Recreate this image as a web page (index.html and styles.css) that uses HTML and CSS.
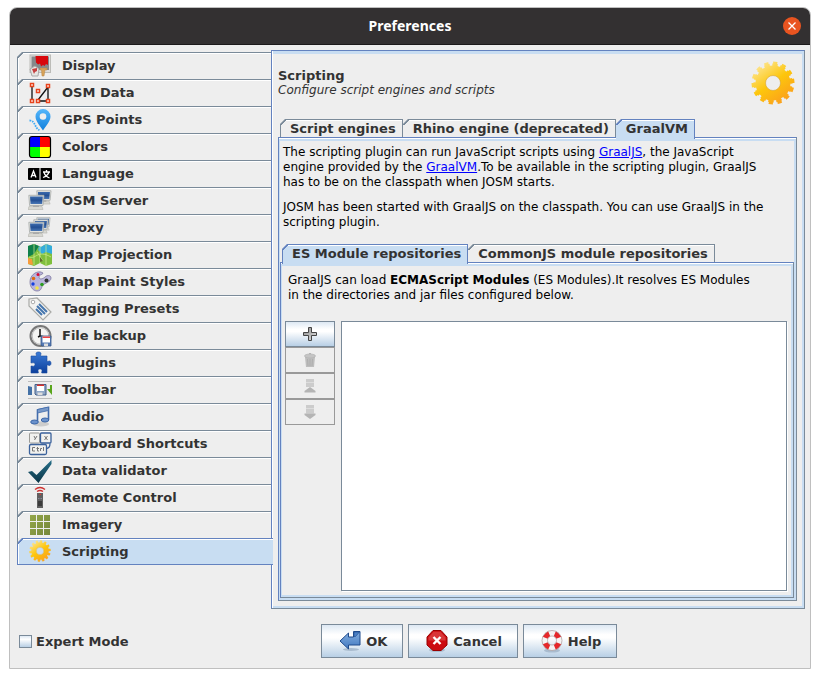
FILE: index.html
```html
<!DOCTYPE html>
<html lang="en">
<head>
<meta charset="utf-8">
<title>Preferences</title>
<link rel="stylesheet" href="styles.css">
</head>
<body>
<svg class="defs" width="0" height="0" aria-hidden="true">
  <defs>
    <linearGradient id="gold" gradientUnits="userSpaceOnUse" x1="8" y1="4" x2="34" y2="40"><stop offset="0" stop-color="#fde48c"/><stop offset=".5" stop-color="#fdc60c"/><stop offset="1" stop-color="#fba01c"/></linearGradient>
    <linearGradient id="screen" x1="0" y1="0" x2="0" y2="1"><stop offset="0" stop-color="#3d6cae"/><stop offset=".5" stop-color="#234f93"/><stop offset="1" stop-color="#4a78b6"/></linearGradient>
    <linearGradient id="blue" x1="0" y1="0" x2="0" y2="1"><stop offset="0" stop-color="#3b7bd6"/><stop offset="1" stop-color="#0c3f9c"/></linearGradient>
    <linearGradient id="pin" x1="0" y1="0" x2="0" y2="1"><stop offset="0" stop-color="#55b6fb"/><stop offset="1" stop-color="#1180dc"/></linearGradient>
    <linearGradient id="arrow" x1="0" y1="0" x2="0" y2="1"><stop offset="0" stop-color="#86b0e0"/><stop offset="1" stop-color="#4078c0"/></linearGradient>
    <linearGradient id="grey" x1="0" y1="0" x2="1" y2="1"><stop offset="0" stop-color="#888"/><stop offset="1" stop-color="#e4e4e4"/></linearGradient>
    <linearGradient id="tick" x1="0" y1="0" x2="0" y2="1"><stop offset="0" stop-color="#28708a"/><stop offset="1" stop-color="#0a3446"/></linearGradient>
    <linearGradient id="olive" gradientUnits="userSpaceOnUse" x1="0" y1="2" x2="24" y2="22"><stop offset="0" stop-color="#95a84a"/><stop offset="1" stop-color="#74863a"/></linearGradient>
    <symbol id="gear" viewBox="0 0 44 44">
      <circle cx="22" cy="22" r="12.5" fill="none" stroke="url(#gold)" stroke-width="10"/>
      <circle cx="22" cy="22" r="17.5" fill="none" stroke="url(#gold)" stroke-width="4" pathLength="28" stroke-dasharray="1.35 .65" stroke-dashoffset="1.175"/>
      <circle cx="22" cy="22" r="20" fill="none" stroke="url(#gold)" stroke-width="3" pathLength="28" stroke-dasharray=".95 1.05" stroke-dashoffset=".975"/>
      <circle cx="22" cy="22" r="7.5" fill="none" stroke="#d9a431" stroke-width="1" opacity=".6"/>
    </symbol>
    <symbol id="pc" viewBox="0 0 17 16">
      <path d="M1 12h13l1 3H0z" fill="#d8d8d2" stroke="#b5b5ae" stroke-width=".6"/>
      <path d="M.8.8h15.200l-1 10.200H1.600z" fill="#e4e4e0" stroke="#a5aaa8" stroke-width=".8"/>
      <path d="M2 2h12.800l-.7 7.500H2.600z" fill="url(#screen)"/><path d="M5 11h6v1.500H5z" fill="#aaa"/>
    </symbol>
  </defs>
</svg>
<div class="window">
  <header class="titlebar">
    <h1>Preferences</h1>
    <button class="close" type="button" aria-label="Close"><svg width="18" height="18" viewBox="0 0 18 18"><path d="M5.500 5.500l7 7m0-7l-7 7" stroke="#fff" stroke-width="1.300"/></svg></button>
  </header>
  <main class="main">
    <nav class="sidebar" role="tablist" aria-orientation="vertical">
      <button class="side" type="button" role="tab"><svg width="24" height="24" viewBox="0 0 24 24"><rect x="2" y="1" width="20.500" height="17.500" fill="#ddd" stroke="#bcbcb8"/><rect x="3.500" y="2.500" width="17.500" height="13.500" fill="#85898b"/><path d="M7.500 2H20v9l-2-1-1.500 2-1.500-1-2 1.500-1-3-2 1-2-2z" fill="#d8080c"/><path d="M4 22l-2-7 5-3 4 3-1 7z" fill="#e7e7e3" stroke="#aaa"/><path d="M4 15l5-1v3l-2 1-1 2z" fill="#c54040"/><path d="M12 14h7v2h-2l-1 6h-2l-.500-6H12z" fill="#d7a25a" stroke="#b98642" stroke-width=".5"/></svg><span>Display</span></button>
      <button class="side" type="button" role="tab"><svg width="24" height="24" viewBox="0 0 24 24"><path d="M4 4v15m6 1h10V6L10 19" fill="none" stroke="#111" stroke-width="1.300"/><g fill="#fff" stroke="#e8431c" stroke-width="1.500"><rect x="2.500" y="2.500" width="3" height="3"/><rect x="8.500" y="8.500" width="3" height="3"/><rect x="18.500" y="3.500" width="3" height="3"/><rect x="2.500" y="18.500" width="3" height="3"/><rect x="8.500" y="18.500" width="3" height="3"/><rect x="18.500" y="18.500" width="3" height="3"/></g></svg><span>OSM Data</span></button>
      <button class="side" type="button" role="tab"><svg width="24" height="24" viewBox="0 0 24 24"><path d="M1.500 12.500c6 0 5 8 10 9.500" fill="none" stroke="#3caaf5" stroke-width="1.800" stroke-dasharray="1.600 1"/><path d="M15 22.500C12 18 7.500 13 7.500 8.500a7.500 7.500 0 0115 0c0 4.500-4.500 9.500-7.500 14z" fill="url(#pin)"/><circle cx="15" cy="8.500" r="3.300" fill="#eee"/></svg><span>GPS Points</span></button>
      <button class="side" type="button" role="tab"><svg width="24" height="24" viewBox="0 0 24 24"><path d="M2 2h10v10H2z" fill="#00f"/><path d="M12 2h10v10H12z" fill="red"/><path d="M2 12h10v10H2z" fill="#0f0"/><path d="M12 12h10v10H12z" fill="#ff0"/><rect x="1.500" y="1.500" width="21" height="21" rx="2.500" fill="none" stroke="#000" stroke-width="1.200"/></svg><span>Colors</span></button>
      <button class="side" type="button" role="tab"><svg width="24" height="24" viewBox="0 0 24 24"><rect y="6" width="24" height="12" rx="1" fill="#000"/><path d="M11 6h2v12h-2z" fill="#888"/><path d="M3 15.500L5.500 9l2.500 6.500M4 13.500h3M15 10h7m-3.500-2v2m2.500 0c-1 3-3 4.500-6 5.500m1-5c1 3 3 4.500 5.500 5.500" fill="none" stroke="#fff" stroke-width="1.300"/></svg><span>Language</span></button>
      <button class="side" type="button" role="tab"><svg width="24" height="24" viewBox="0 0 24 24"><use href="#pc" x="8" y="1" width="16" height="15"/><use href="#pc" x="0" y="5" width="17" height="17"/></svg><span>OSM Server</span></button>
      <button class="side" type="button" role="tab"><svg width="24" height="24" viewBox="0 0 24 24"><use href="#pc" x="8" y="1" width="15" height="14"/><use href="#pc" x="5" y="3" width="16" height="15"/><use href="#pc" x="0" y="5" width="17" height="17"/></svg><span>Proxy</span></button>
      <button class="side" type="button" role="tab"><svg width="24" height="24" viewBox="0 0 24 24"><path d="M0 3l6-2 7 3 5-3 6 2v18l-6 2-6-3-6 3-6-2z" fill="#7fbf3c"/><path d="M0 3l6-2 5 2-5 8-6 3z" fill="#10804b"/><path d="M11 3l2 1 5-3 6 2v8l-6-2-4 2-4-4z" fill="#34acdc"/><path d="M0 15l4 1 1 6-5-1z" fill="#f79b3b"/><path d="M6 1v21m6-18v16m6-19v22M1 14c7 3 8-8 22 0M9 9l6 9" fill="none" stroke="#d4ec92" stroke-width=".7"/><path d="M12 14l3 4-3 1z" fill="#5f6e2c"/></svg><span>Map Projection</span></button>
      <button class="side" type="button" role="tab"><svg width="24" height="24" viewBox="0 0 24 24"><path d="M13 2c-6-1-11 4-11 10 0 6 4 9 7 9 5 0 4-4 6-6 2-2 8-3 8-7 0-3-4-3-6-1-2 2-6 3-6 0s4-2 4-4z" fill="#b9b5dc" stroke="#7d789f" stroke-width=".8"/><circle cx="10" cy="4.500" r="1.500" fill="#d80a35"/><circle cx="5.500" cy="8.500" r="1.800" fill="#de6a10"/><circle cx="5" cy="14" r="1.700" fill="#1640e0"/><circle cx="9" cy="18" r="1.800" fill="#f5e548"/><circle cx="14" cy="14.500" r="1.800" fill="#2c9c20"/><circle cx="18.500" cy="10.500" r="2" fill="#333"/></svg><span>Map Paint Styles</span></button>
      <button class="side" type="button" role="tab"><svg width="24" height="24" viewBox="0 0 24 24"><path d="M1 2l8-1 14 14-8 8L1 9z" fill="#f3f3f1" stroke="#a9aaa7" stroke-width="1.200"/><circle cx="5" cy="5" r="1.800" fill="#fff" stroke="#aaa"/><path d="M11 7l8 8M9 9l8 8M8 12l6 6" stroke="#4475ae" stroke-width="2"/></svg><span>Tagging Presets</span></button>
      <button class="side" type="button" role="tab"><svg width="24" height="24" viewBox="0 0 24 24"><circle cx="12.500" cy="12" r="10" fill="#f5f5f3" stroke="#777" stroke-width="2"/><circle cx="12.500" cy="12" r="8.300" fill="none" stroke="#bbb"/><path d="M12 5v7l5 1M12 12l-2 1" stroke="#111" stroke-width="1.500" fill="none"/><path d="M13 12h10v10H14l-1-1z" fill="#557ab4" stroke="#38588b" stroke-width=".8"/><path d="M14.500 12.500h7.500v6h-7.500z" fill="#fff"/><path d="M14.500 12.500h7.500v1.500h-7.500z" fill="#e44"/><path d="M16 19.500h4v2.500h-4z" fill="#ddd"/></svg><span>File backup</span></button>
      <button class="side" type="button" role="tab"><svg width="24" height="24" viewBox="0 0 24 24"><path d="M3 5h5c1 0 0-1.500 0-2.500C8 .5 13 .5 13 2.500 13 3.500 12 5 13 5h6v5c0 1 1.500 0 2.500 0 2 0 2 4.500 0 4.500-1 0-2.500-1-2.500 0v7.500h-5c-1 0 0-1 0-2.500 0-2-4-2-4 0 0 1.500 1 2.500 0 2.500H3v-7c1 0 4 1 4-1.500S4 12 3 12z" fill="url(#blue)" stroke="#174c9f" stroke-width=".6"/></svg><span>Plugins</span></button>
      <button class="side" type="button" role="tab"><svg width="24" height="24" viewBox="0 0 24 24"><path d="M0 3.500h24M0 20.500h24" stroke="#bcbcbc"/><path d="M0 8l4 1v8H0z" fill="#4471a6"/><path d="M7 6.500h11v10.500H8l-1-1z" fill="#8fa6c6" stroke="#435e89"/><path d="M9 8h7v5H9z" fill="#fff"/><path d="M9 6.500h7v1.500H9z" fill="#d9322c"/><path d="M9.500 14.500h5V17h-5z" fill="#ddd"/><path d="M24 7h-2v4h-3l5 6z" fill="#59a51b"/></svg><span>Toolbar</span></button>
      <button class="side" type="button" role="tab"><svg width="24" height="24" viewBox="0 0 24 24"><ellipse cx="13" cy="19" rx="8" ry="2.500" fill="#ccc"/><path d="M9.500 17V5l11-2.500V15" fill="none" stroke="#426cac" stroke-width="1.600"/><path d="M9.500 4.500l11-2.500v3.500L9.500 8z" fill="#7899c8" stroke="#426cac" stroke-width=".8"/><ellipse cx="6.500" cy="17" rx="3.800" ry="2" fill="#6a91cb" stroke="#3c67a8"/><ellipse cx="17" cy="15" rx="3.800" ry="2" fill="#6a91cb" stroke="#3c67a8"/></svg><span>Audio</span></button>
      <button class="side" type="button" role="tab"><svg width="24" height="24" viewBox="0 0 24 24"><g fill="#f1f1ee" stroke="#9a9a96"><rect x="1.500" y="1" width="10" height="10" rx="1"/><rect x="12.500" y="1" width="10.500" height="10" rx="1" stroke="#3b629c" stroke-width="1.300"/><rect x="1.500" y="12.500" width="17" height="10" rx="1.500" stroke="#3b629c" stroke-width="1.300"/></g><path d="M22 11.500c0 4-2 5-4 5" fill="none" stroke="#3b629c" stroke-width="1.300"/><path d="M6 4l1.500 3M9 4L6.500 8M16.500 4l3 4m0-4l-3 4" stroke="#777" fill="none"/><path d="M7 15.500H4.500V19H7M9.500 15v4h1.500M8.500 16.500H11M12.500 19v-2.500h1.500M15.500 15v4" stroke="#777" fill="none"/></svg><span>Keyboard Shortcuts</span></button>
      <button class="side" type="button" role="tab"><svg width="24" height="24" viewBox="0 0 24 24"><path d="M0 13l4-1 4.500 4L23.500 1v4L10.500 24z" fill="url(#tick)"/></svg><span>Data validator</span></button>
      <button class="side" type="button" role="tab"><svg width="24" height="24" viewBox="0 0 24 24"><path d="M7 3.500q5-4 10 0M9 5.500q3-2 6 0" fill="none" stroke="#cf3030" stroke-width="1.300"/><path d="M9 7h6v15H9z" fill="#606060"/><path d="M10 15h4v5h-4z" fill="#3c3c3c"/><path d="M11.500 8h1.500v1h-1.500z" fill="#d33"/><path d="M10 12h1.500v1H10zM12.500 12H14v1h-1.500z" fill="#889"/></svg><span>Remote Control</span></button>
      <button class="side" type="button" role="tab"><svg width="24" height="24" viewBox="0 0 24 24"><path d="M2 2h6v6H2zM9 2h6v6H9zM16 2h6v6h-6zM2 9h6v6H2zM9 9h6v6H9zM16 9h6v6h-6zM2 16h6v6H2zM9 16h6v6H9zM16 16h6v6h-6z" fill="url(#olive)"/></svg><span>Imagery</span></button>
      <button class="side selected" type="button" role="tab" aria-selected="true"><svg width="24" height="24" viewBox="0 0 24 24"><use href="#gear" x="1" y="1" width="22" height="22"/></svg><span>Scripting</span></button>
    </nav>
    <section class="panel">
      <div class="heading">
        <div>
          <h2>Scripting</h2>
          <p>Configure script engines and scripts</p>
        </div>
        <svg width="44" height="44" viewBox="0 0 44 44" aria-hidden="true"><use href="#gear"/></svg>
      </div>
      <div class="tabs" role="tablist">
        <button class="tab" type="button" role="tab">Script engines</button>
        <button class="tab" type="button" role="tab">Rhino engine (deprecated)</button>
        <button class="tab selected" type="button" role="tab" aria-selected="true">GraalVM</button>
      </div>
      <div class="pane outer">
        <div class="intro">
          <p>The scripting plugin can run JavaScript scripts using <a href="#graaljs">GraalJS</a>, the JavaScript<br>engine provided by the <a href="#graalvm">GraalVM</a>.To be available in the scripting plugin, GraalJS<br>has to be on the classpath when JOSM starts.</p>
          <p>JOSM has been started with GraalJS on the classpath. You can use GraalJS in the<br>scripting plugin.</p>
        </div>
        <div class="tabs" role="tablist">
          <button class="tab selected" type="button" role="tab" aria-selected="true">ES Module repositories</button>
          <button class="tab" type="button" role="tab">CommonJS module repositories</button>
        </div>
        <div class="pane inner">
          <p class="note">GraalJS can load <strong>ECMAScript Modules</strong> (ES Modules).It resolves ES Modules<br>in the directories and jar files configured below.</p>
          <div class="editor">
            <div class="tools">
              <button class="tool" type="button" aria-label="Add"><svg width="16" height="16" viewBox="0 0 16 16"><path d="M6.500 1.500h3v5h5v3h-5v5h-3v-5h-5v-3h5z" fill="url(#grey)" stroke="#444"/></svg></button>
              <button class="tool" type="button" aria-label="Delete" disabled><svg width="16" height="16" viewBox="0 0 16 16"><path d="M3 5h10l-1 10H4z" fill="#bdbdbd"/><ellipse cx="8" cy="4" rx="5.500" ry="2" fill="#c4c4c4" stroke="#b2b2b2" stroke-width=".7"/><path d="M7 1.500h2M5.500 7l.5 7M8 7v7m2.500-7l-.5 7" stroke="#a9a9a9" stroke-width=".8"/></svg></button>
              <button class="tool" type="button" aria-label="Move up" disabled><svg width="16" height="16" viewBox="0 0 16 16"><path d="M4 1h8v8H4z" fill="#ccc"/><path d="M4 4.500h8" stroke="#ddd"/><path d="M8 9l5.500 4v1.500h-11V13z" fill="#b4b4b4"/></svg></button>
              <button class="tool" type="button" aria-label="Move down" disabled><svg width="16" height="16" viewBox="0 0 16 16"><path d="M4 1h8v8.500H4z" fill="#ccc"/><path d="M4 4.500h8" stroke="#ddd"/><path d="M8 15l5.500-4V9.500h-11V11z" fill="#b4b4b4"/></svg></button>
            </div>
            <ul class="list" role="listbox" aria-label="Repositories"></ul>
          </div>
        </div>
      </div>
    </section>
  </main>
  <footer class="footer">
    <label class="expert"><input type="checkbox"><span>Expert Mode</span></label>
    <div class="actions">
      <button class="action" type="button"><svg width="24" height="24" viewBox="0 0 24 24"><ellipse cx="13" cy="20.500" rx="8" ry="1.500" fill="#a9bccf"/><path d="M2 12l8.500-8v4h5V2.500h6.500V16H10.500v4z" fill="url(#arrow)" stroke="#1f4a8c"/><path d="M16 3h5.500l-4 4.500H16z" fill="#4a80c6" stroke="#1f4a8c" stroke-width=".6"/></svg><span>OK</span></button>
      <button class="action" type="button"><svg width="24" height="24" viewBox="0 0 24 24"><ellipse cx="12" cy="21" rx="8" ry="2" fill="#a9bccf"/><path d="M8 1.500h8L22 8v8l-6 5.500H8L2 16V8z" fill="#cc0c12" stroke="#900"/><path d="M8.500 2.800h7L20.500 8.500v3h-17v-3z" fill="#de4a4a" opacity=".7"/><path d="M8.500 8l7 7m0-7l-7 7" stroke="#fff" stroke-width="2.400"/></svg><span>Cancel</span></button>
      <button class="action" type="button"><svg width="24" height="24" viewBox="0 0 24 24"><ellipse cx="12" cy="21.500" rx="8" ry="2" fill="#a9bccf"/><circle cx="12" cy="11.500" r="7.300" fill="none" stroke="#f4f4f4" stroke-width="5.500"/><circle cx="12" cy="11.500" r="7.300" fill="none" stroke="#e5282b" stroke-width="5.500" pathLength="8" stroke-dasharray="1 1" stroke-dashoffset="-.5"/><circle cx="12" cy="11.500" r="10" fill="none" stroke="#a99" stroke-width=".7"/><circle cx="12" cy="11.500" r="4.500" fill="none" stroke="#a99" stroke-width=".7"/></svg><span>Help</span></button>
    </div>
  </footer>
</div>
</body>
</html>
```
FILE: styles.css
```css
:root {
  --line: #7a8a99;
  --active: #6382bf;
  --light: #c8ddf2;
  --bg: #eee;
  --font: "DejaVu Sans", sans-serif;
}

* { box-sizing: border-box; }

body {
  margin: 7px 9px 9px;
  background: #fff;
  color: #000;
  font: 12px/15px var(--font);
}

h1, h2, p, ul { margin: 0; padding: 0; }
button { font: bold 13px/15px var(--font); color: #333; margin: 0; }
svg { display: block; flex: none; }
.defs { position: absolute; }

.window {
  display: flex;
  flex-direction: column;
  min-height: calc(100vh - 16px);
  border: 1px solid #bfbfbf;
  border-radius: 8px 8px 0 0;
  background: var(--bg);
}

.titlebar {
  display: grid;
  grid-template-columns: 1fr auto 1fr;
  align-items: center;
  height: 37px;
  padding: 0 9px;
  border-bottom: 1px solid #1c1a1b;
  border-radius: 7px 7px 0 0;
  background: #333031;
}
.titlebar h1 {
  grid-column: 2;
  color: #fff;
  font: bold 14px/20px "Noto Sans", var(--font);
}
.close {
  justify-self: end;
  padding: 0;
  border: 0;
  border-radius: 50%;
  background: #e95420;
}

.main {
  display: flex;
  flex: 1;
  padding: 5px 5px 0 7px;
}

.sidebar {
  display: flex;
  flex-direction: column;
  width: 254px;
  padding-top: 2px;
}
.side {
  --edge: var(--line);
  --fill: var(--bg);
  display: flex;
  align-items: center;
  gap: 10px;
  height: 27px;
  padding: 0 0 0 11px;
  border: 0;
  text-align: left;
  background:
    linear-gradient(135deg, var(--bg) 3px, var(--edge) 4px, var(--edge) 5px, var(--fill) 5px) 0 0 / 6px 6px no-repeat,
    linear-gradient(var(--edge) 1px, #fff 1px, #fff 2px, transparent 2px) 6px 0 no-repeat,
    linear-gradient(90deg, var(--edge) 1px, #fff 1px, #fff 2px, transparent 2px) 0 6px no-repeat,
    var(--fill);
}
.side + .side {
  background:
    linear-gradient(var(--line), var(--line)) 0 0 / 1px 6px no-repeat,
    linear-gradient(135deg, var(--bg) 3px, var(--edge) 4px, var(--edge) 5px, var(--fill) 5px) 0 0 / 6px 6px no-repeat,
    linear-gradient(var(--edge) 1px, #fff 1px, #fff 2px, transparent 2px) 6px 0 no-repeat,
    linear-gradient(90deg, var(--edge) 1px, #fff 1px, #fff 2px, transparent 2px) 0 6px no-repeat,
    var(--fill);
}
.side.selected {
  --edge: var(--active);
  --fill: var(--light);
  position: relative;
  margin-right: -2px;
  border-bottom: 1px solid var(--active);
}

.panel {
  display: flex;
  flex: 1;
  flex-direction: column;
  min-width: 0;
  padding: 7px 7px 7px 6px;
  border: 1px solid var(--line);
  border-color: var(--active) var(--line) var(--line) var(--active);
  box-shadow: inset 1px 0 #fff, inset -2px -2px var(--light), inset 0 3px var(--light);
}
.heading {
  display: flex;
  align-items: center;
  justify-content: space-between;
  padding: 3px 2px 0 0;
  color: #333;
}
.heading h2 { font: bold 13px/15px var(--font); }
.heading p { font-style: italic; }

.tabs {
  display: flex;
  padding-left: 2px;
}
.heading + .tabs { margin-top: 14px; }
.tab {
  --edge: var(--line);
  --fill: var(--bg);
  height: 18px;
  padding: 2px 6px 1px 10px;
  border: 0;
  border-right: 1px solid var(--edge);
  background:
    linear-gradient(135deg, var(--bg) 3px, var(--edge) 4px, var(--edge) 5px, var(--fill) 5px) 0 0 / 6px 6px no-repeat,
    linear-gradient(var(--edge) 1px, #fff 1px, #fff 2px, transparent 2px) 6px 0 no-repeat,
    linear-gradient(90deg, var(--edge) 1px, transparent 1px) 0 6px no-repeat,
    var(--fill);
  white-space: nowrap;
}
.tab + .tab {
  background:
    linear-gradient(135deg, var(--bg) 3px, var(--edge) 4px, var(--edge) 5px, var(--fill) 5px) 0 0 / 6px 6px no-repeat,
    linear-gradient(var(--edge) 1px, #fff 1px, #fff 2px, transparent 2px) 6px 0 no-repeat,
    var(--fill);
}
.tab.selected {
  --edge: var(--active);
  --fill: var(--light);
  position: relative;
  height: 20px;
  margin-bottom: -2px;
  padding-bottom: 3px;
}

.pane {
  display: flex;
  flex: 1;
  flex-direction: column;
  border: 1px solid var(--line);
  border-color: var(--active) var(--line) var(--line) var(--active);
  box-shadow: inset 0 1px #fff, inset -2px -2px var(--light), inset 1px 3px var(--light);
}
.outer { padding: 7px 2px 2px 1px; }
.intro {
  display: grid;
  gap: 10px;
  padding: 0 2px 14px 3px;
}
a { color: #00f; }
.inner { padding: 10px 6px 6px 4px; }
.note { padding-left: 3px; }

.editor {
  display: flex;
  flex: 1;
  gap: 6px;
  margin-top: 18px;
}
.tools { width: 50px; }
.tool {
  display: flex;
  align-items: center;
  justify-content: center;
  width: 100%;
  height: 26px;
  padding: 0;
  border: 1px solid #999;
  background: var(--bg);
}
.tool:enabled {
  border-color: var(--line);
  background: linear-gradient(#dde8f3, #fff 30%, #fff 40%, #b8cfe5);
}
.list {
  flex: 1;
  border: 1px solid var(--line);
  background: #fff;
  box-shadow: 1px 1px #fff;
}

.footer {
  display: flex;
  align-items: center;
  padding: 15px 0 10px 9px;
}
.expert {
  display: flex;
  align-items: center;
  gap: 4px;
  color: #333;
  font-weight: bold;
  font-size: 13px;
}
.expert input {
  width: 13px;
  height: 13px;
  margin: 0;
  border: 1px solid var(--line);
  appearance: none;
  background: linear-gradient(#dde8f3, #fff 30%, #b8cfe5);
}
.actions {
  display: flex;
  flex: 1;
  justify-content: center;
  gap: 5px;
}
.action {
  display: flex;
  align-items: center;
  gap: 4px;
  height: 34px;
  padding: 0 15px 0 16px;
  border: 1px solid var(--line);
  background: linear-gradient(#dde8f3, #fff 30%, #fff 40%, #b8cfe5);
}
```
